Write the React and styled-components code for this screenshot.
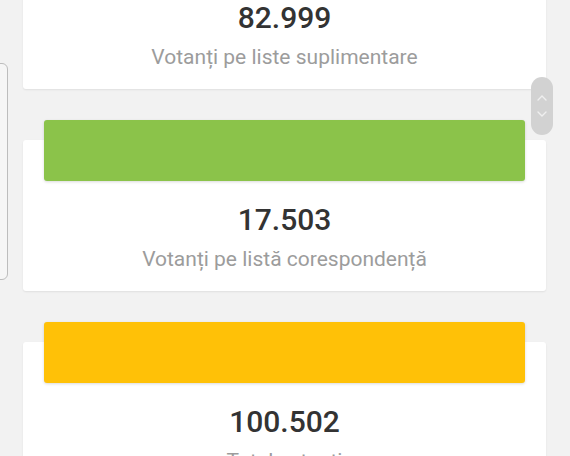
import styled, { createGlobalStyle } from 'styled-components';

const GlobalStyle = createGlobalStyle`
  html, body {
    margin: 0;
    padding: 0;
    background: #f2f2f2;
    font-family: Roboto, "Liberation Sans", sans-serif;
  }
`

const Viewport = styled.div`
  position: relative;
  width: 570px;
  height: 456px;
  overflow: hidden;
  background: #f2f2f2;
`

const List = styled.div`
  display: flex;
  flex-direction: column;
  gap: 31px;
  /* scrolled: first card's bar is above the top edge */
  margin-top: -82px;
  padding: 0 24px 0 23px;
`

const Card = styled.div`
  margin-top: 20px;
  background: #fff;
  border-radius: 3px;
  box-shadow: 0 1px 2px rgba(0, 0, 0, 0.08);
  display: flex;
  flex-direction: column;
  align-items: center;
  padding: 0 21px 19px;
`

const Bar = styled.div`
  align-self: stretch;
  height: 61px;
  margin-top: -20px;
  border-radius: 3px;
  background: ${(p) => p.color};
  box-shadow: 0 1px 3px rgba(0, 0, 0, 0.15);
`

const Value = styled.div`
  margin-top: 23px;
  font-size: 30px;
  line-height: 32px;
  font-weight: 500;
  color: #333;
`

const Label = styled.div`
  margin-top: 11px;
  font-size: 21px;
  line-height: 25px;
  color: #9c9c9c;
  white-space: nowrap;
`

const SideTab = styled.div`
  position: absolute;
  left: -20px;
  top: 63px;
  width: 26px;
  height: 215px;
  border: 1px solid #bdbdbd;
  border-radius: 6px;
  background: #f6f6f6;
`

const Scroller = styled.div`
  position: absolute;
  left: 531px;
  top: 77px;
  width: 22px;
  height: 58px;
  border-radius: 11px;
  background: #d2d2d2;
  display: flex;
  flex-direction: column;
  align-items: center;
  justify-content: center;
  gap: 8px;
`

const Chevron = ({ up }) => (
  <svg width="12" height="8" viewBox="0 0 12 8">
    <path
      d={up ? 'M2 6 L6 2 L10 6' : 'M2 2 L6 6 L10 2'}
      fill="none"
      stroke="#efefef"
      strokeWidth="1.4"
      strokeLinecap="round"
    />
  </svg>
)

const stats = [
  { color: '#8bc34a', value: '82.999', label: 'Votanți pe liste suplimentare' },
  { color: '#8bc34a', value: '17.503', label: 'Votanți pe listă corespondență' },
  { color: '#ffc107', value: '100.502', label: 'Total votanți' },
]

export default function App() {
  return (
    <Viewport>
      <GlobalStyle />
      <List>
        {stats.map((s, id) => (
          <Card key={id}>
            <Bar color={s.color} />
            <Value>{s.value}</Value>
            <Label>{s.label}</Label>
          </Card>
        ))}
      </List>
      <SideTab />
      <Scroller>
        <Chevron up />
        <Chevron />
      </Scroller>
    </Viewport>
  )
}
